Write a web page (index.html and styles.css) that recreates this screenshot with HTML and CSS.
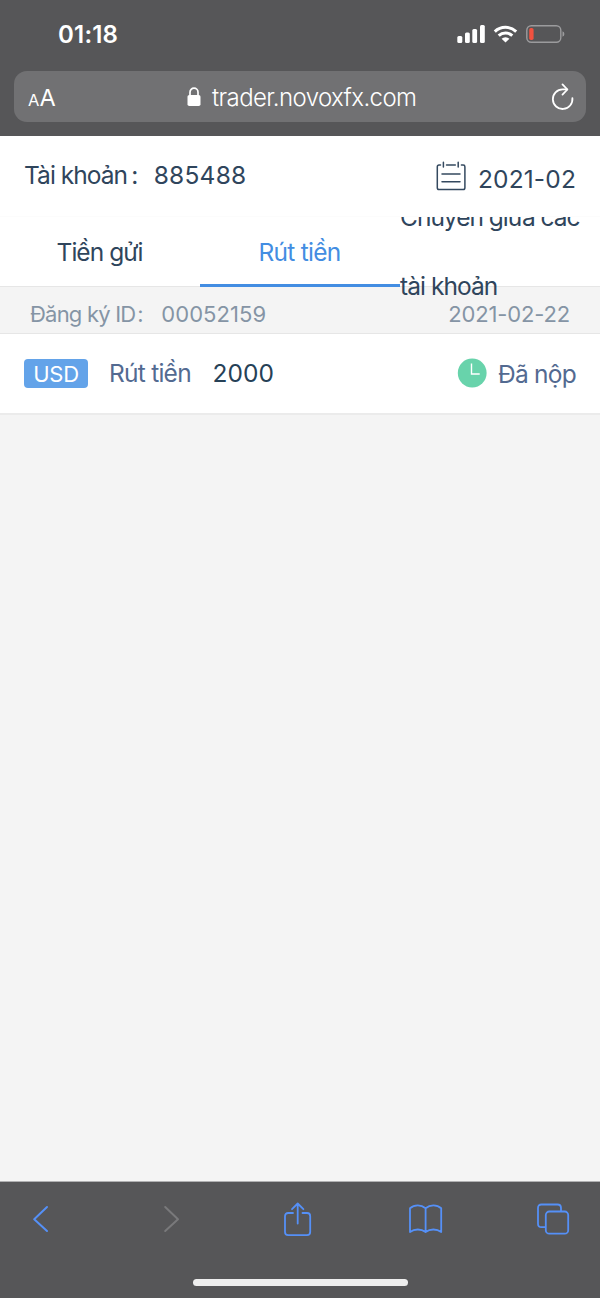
FILE: index.html
```html
<!DOCTYPE html>
<html lang="vi">
<head>
<meta charset="utf-8">
<title>trader.novoxfx.com</title>
<link rel="stylesheet" href="styles.css">
</head>
<body>
<div class="phone">
  <header class="browser-top">
    <div class="status">
      <span class="clock">01:18</span>
      <svg class="status-icons" width="108" height="20" viewBox="0 0 108 20">
        <g fill="#fff">
          <rect x="0.3" y="12" width="5" height="7" rx="1.5"/>
          <rect x="8" y="8.5" width="4.8" height="10.5" rx="1.5"/>
          <rect x="15.3" y="5" width="4.8" height="14" rx="1.5"/>
          <rect x="23" y="1" width="4.8" height="18" rx="1.5"/>
        </g>
        <g fill="none" stroke="#fff" stroke-width="3">
          <path d="M37.8 7.6 A15.6 15.6 0 0 1 59.2 7.6"/>
          <path d="M41.7 11.7 A10 10 0 0 1 55.3 11.7"/>
        </g>
        <path d="M48.5 18.6 L44.6 14.8 A5.6 5.6 0 0 1 52.4 14.8 Z" fill="#fff"/>
        <rect x="69.8" y="1.7" width="34" height="16.6" rx="4.5" fill="none" stroke="#9b9b9d" stroke-width="1.4"/>
        <rect x="72.2" y="4" width="4.4" height="12" rx="1.8" fill="#f1513f"/>
        <path d="M105.5 7.2 Q107.4 8 107.4 10 Q107.4 12 105.5 12.8 Z" fill="#9b9b9d"/>
      </svg>
    </div>
    <div class="address">
      <span class="reader"><span class="reader-small">A</span><span class="reader-large">A</span></span>
      <span class="site">
        <svg width="14" height="20" viewBox="0 0 14 20">
          <rect x="0.5" y="8" width="13" height="11" rx="1.8" fill="#fff"/>
          <path d="M3 9 V5.2 A4 4 0 0 1 11 5.2 V9" fill="none" stroke="#fff" stroke-width="1.7"/>
        </svg>
        <span class="url">trader.novoxfx.com</span>
      </span>
      <svg class="reload" width="24" height="28" viewBox="0 0 24 28" fill="none" stroke="#fff" stroke-width="1.8" stroke-linecap="round" stroke-linejoin="round">
        <path d="M21.4 15.2 A9.8 9.8 0 1 1 11.6 6.4 H16"/>
        <path d="M11.5 1.4 L16.4 6.5 L11.5 11.6"/>
      </svg>
    </div>
  </header>

  <main class="page">
    <section class="account">
      <div class="account-id"><span class="t-account">Tài khoản</span><span class="colon">:</span><span class="t-number">885488</span></div>
      <div class="month">
        <svg width="30" height="30" viewBox="0 0 30 30" fill="none" stroke="#34495f" stroke-width="1.5" stroke-linecap="round">
          <path d="M4.5 4 H3 Q1.3 4 1.3 5.7 V26.8 Q1.3 28.6 3 28.6 H27.2 Q28.9 28.6 28.9 26.8 V5.7 Q28.9 4 27.2 4 H25.4"/>
          <path d="M10.5 4 H19.3 M7.4 1.2 V6 M22.2 1.2 V6 M6 13 H24 M6 20.8 H24"/>
        </svg>
        <span class="t-month">2021-02</span>
      </div>
    </section>
    <nav class="tabs">
      <a class="tab"><span class="t-deposit">Tiền gửi</span></a>
      <a class="tab active"><span class="t-withdraw">Rút tiền</span></a>
      <a class="tab tab-long"><span><span class="t-transfer">Chuyển giữa các</span><br><span class="t-transfer-end">tài khoản</span></span></a>
    </nav>
    <section class="record">
      <div class="record-head">
        <div class="record-id"><span class="t-register">Đăng ký ID</span><span class="colon small">:</span><span class="t-id">00052159</span></div>
        <span class="t-date">2021-02-22</span>
      </div>
      <div class="record-row">
        <span class="currency"><span class="t-usd">USD</span></span>
        <span class="kind">Rút tiền</span>
        <span class="amount">2000</span>
        <span class="state">
          <svg width="30" height="30" viewBox="0 0 30 30">
            <circle cx="15.2" cy="15" r="14.4" fill="#68d3ab"/>
            <path d="M14.5 5.5 V16 H22.7" fill="none" stroke="#fff" stroke-width="1.4"/>
          </svg>
          <span class="t-state">Đã nộp</span>
        </span>
      </div>
    </section>
  </main>

  <footer class="toolbar">
    <div class="tools">
      <svg width="18" height="28" viewBox="0 0 18 28" fill="none" stroke="#5590f7" stroke-width="2" stroke-linecap="round" stroke-linejoin="round"><path d="M15 2 L2.2 14.2 L15 26"/></svg>
      <svg width="18" height="28" viewBox="0 0 18 28" fill="none" stroke="#79797b" stroke-width="2" stroke-linecap="round" stroke-linejoin="round"><path d="M2.2 2 L15 14.2 L2.2 26"/></svg>
      <svg width="30" height="36" viewBox="0 0 30 36" fill="none" stroke="#5590f7" stroke-width="1.8" stroke-linecap="round" stroke-linejoin="round">
        <path d="M10 12 H5.2 Q2 12 2 15.2 V31 Q2 34.2 5.2 34.2 H24 Q27.2 34.2 27.2 31 V15.2 Q27.2 12 24 12 H19.5"/>
        <path d="M14.7 22.5 V2.5 M9 8.2 L14.7 2.5 L20.4 8.2"/>
      </svg>
      <svg width="36" height="32" viewBox="0 0 36 32" fill="none" stroke="#5590f7" stroke-width="1.8" stroke-linejoin="round">
        <path d="M17.6 5.2 Q14.2 2.4 9.8 2.4 Q5.2 2.4 2 5.2 V29 Q5.5 26.5 9.8 26.5 Q14.2 26.5 17.6 29 Q21 26.5 25.4 26.5 Q29.8 26.5 33.2 29 V5.2 Q30 2.4 25.4 2.4 Q21 2.4 17.6 5.2 V29"/>
      </svg>
      <svg width="34" height="34" viewBox="0 0 34 34" fill="none" stroke="#5590f7" stroke-width="1.8" stroke-linecap="round">
        <rect x="9.8" y="9.5" width="22.4" height="22.2" rx="3.5"/>
        <path d="M9 25.2 H5.5 Q2 25.2 2 21.7 V6 Q2 2.5 5.5 2.5 H21.5 Q25 2.5 25 6 V8.5"/>
      </svg>
    </div>
    <div class="home"></div>
  </footer>
</div>
</body>
</html>
```
FILE: styles.css
```css
* { box-sizing: border-box; }
body { margin: 0; background: #f4f4f4; font-family: Inter, "Noto Sans", sans-serif; color: #2f455c; }
svg { display: block; flex: none; }
span { white-space: nowrap; }

.phone { width: 600px; height: 1298px; display: flex; flex-direction: column; overflow: hidden; background: #f4f4f4; }

.browser-top { height: 136px; background: #565658; color: #fff; flex: none; }
.status { height: 71px; padding: 24px 35px 0 58px; display: flex; justify-content: space-between; }
.clock { font-size: 24px; font-weight: 600; line-height: 21px; letter-spacing: 0.2px; }
.address { height: 51px; margin: 0 14px; padding: 0 11px 0 14px; border-radius: 13px; background: #717173; display: grid; grid-template-columns: 159px 1fr 24px; align-items: center; }
.reader { display: flex; align-items: baseline; padding-top: 2px; }
.reader-small { font-size: 16.5px; line-height: 22px; }
.reader-large { font-size: 23.5px; line-height: 26px; }
.site { display: flex; align-items: center; gap: 11px; }
.url { font-size: 24px; line-height: 30px; letter-spacing: -0.6px; font-weight: 350; padding-top: 2px; }

.page { flex: 1; }
.account { position: relative; z-index: 2; height: 81px; padding: 0 24px; background: #fff; border-bottom: 1px solid #fcfcfc; display: flex; justify-content: space-between; font-size: 24.5px; }
.account-id { padding-top: 24px; line-height: 31px; display: flex; }
.colon { width: 26.5px; padding-left: 4px; }
.colon.small { width: 26px; padding-left: 2px; }
.month { display: flex; padding-top: 25px; gap: 12px; }
.t-month { padding-top: 3px; line-height: 31px; }

.tabs { height: 70px; background: #fff; border-bottom: 1px solid #e6e6e6; display: grid; grid-template-columns: repeat(3, 200px); font-size: 24.5px; line-height: 69px; }
.tab { height: 70px; display: flex; align-items: center; justify-content: center; border-bottom: 0 solid #438de2; }
.active { color: #438de2; border-bottom-width: 3px; padding-top: 4px; }
.tab-long { position: relative; z-index: 1; justify-content: flex-start; }

.record-head { height: 47px; padding: 11px 30px 0; border-bottom: 1px solid #e6e6e6; display: flex; justify-content: space-between; color: #8594a5; font-size: 22px; line-height: 32px; }
.record-id { display: flex; }
.record-row { height: 81px; padding: 0 24px 2px; background: #fff; border-bottom: 2px solid #ebebeb; display: flex; align-items: center; font-size: 24.5px; line-height: 30px; }
.currency { width: 64px; height: 29px; margin-top: 2px; border-radius: 4px; background: #63a3e9; color: #fff; display: flex; align-items: center; justify-content: center; font-size: 22px; }
.kind { margin-left: 21px; color: #536a91; width: 103.5px; }
.amount { color: #264157; }
.state { margin-left: auto; display: flex; align-items: center; gap: 11px; color: #536a91; }
.t-state { padding-top: 2px; letter-spacing: -0.75px; }
.t-usd { letter-spacing: -0.3px; }

.t-account, .t-transfer-end { letter-spacing: -0.95px; }
.t-deposit { letter-spacing: -0.95px; padding-right: 1px; }
.t-transfer { letter-spacing: -1px; }
.t-withdraw, .kind { letter-spacing: -0.75px; }
.t-withdraw { padding-right: 1px; }
.t-register { letter-spacing: -0.8px; }
.t-number { letter-spacing: 0.25px; }
.t-month { letter-spacing: 0.15px; }
.amount, .t-id { letter-spacing: 0.05px; }
.t-date { letter-spacing: -0.15px; }

.toolbar { height: 117px; flex: none; background: #565658; border-top: 1px solid #b0b0b2; padding-top: 18px; }
.tools { height: 38px; padding: 0 0 1px 32px; display: grid; grid-template-columns: 131px 120px 125px 128px 34px; align-items: center; }
.home { width: 215px; height: 7px; margin: 41px auto 0; border-radius: 4px; background: #eee; }
```
